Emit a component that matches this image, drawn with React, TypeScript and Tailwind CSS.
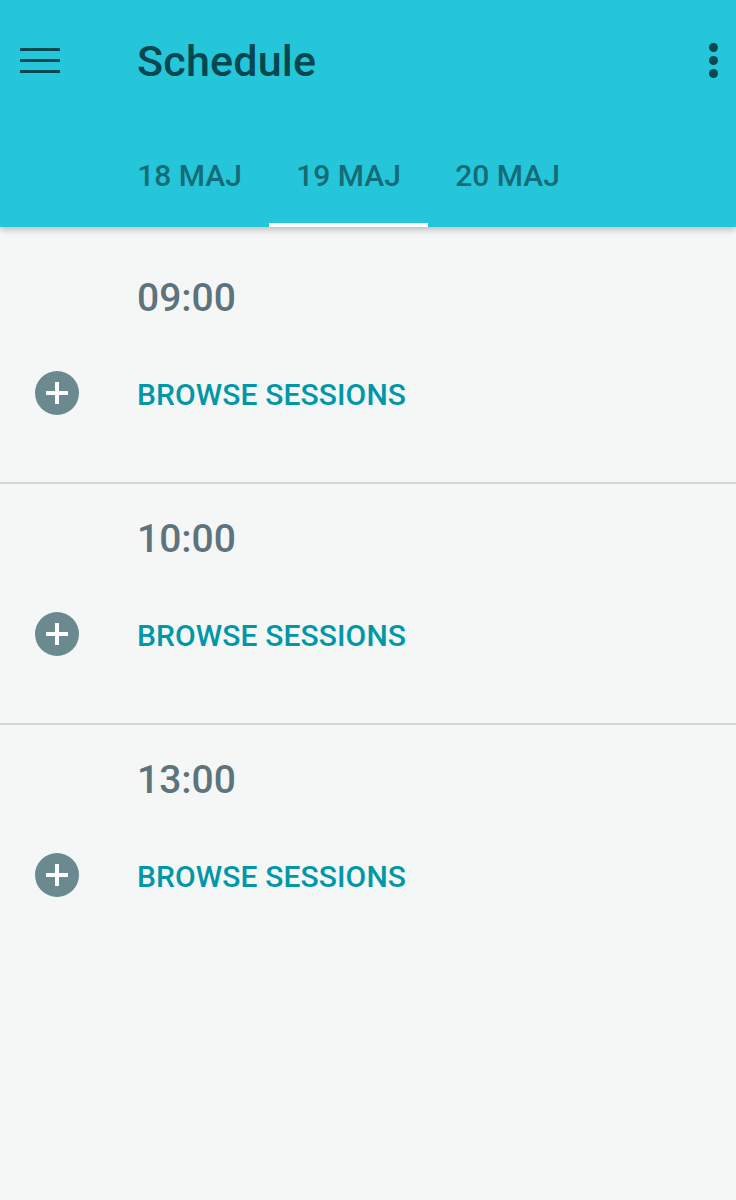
import React from 'react';

const slots = ['09:00', '10:00', '13:00'];
const days = ['18 MAJ', '19 MAJ', '20 MAJ'];

function PlusCircle() {
  return (
    <svg width="44" height="44" viewBox="0 0 44 44">
      <circle cx="22" cy="22" r="22" fill="#6A8A90" />
      <rect x="20" y="11" width="4" height="22" fill="#fff" />
      <rect x="11" y="20" width="22" height="4" fill="#fff" />
    </svg>
  );
}

export default function App() {
  return (
    <div
      className="w-[736px] h-[1200px] bg-[#F5F7F7] overflow-hidden"
      style={{ fontFamily: 'Roboto, "Noto Sans", sans-serif' }}
    >
      {/* App bar with tabs */}
      <div className="relative z-10 bg-[#26C6DA] shadow-[0_3px_6px_rgba(0,0,0,0.22)]">
        <div className="h-[120px] flex items-center">
          <div className="w-[137px] pl-[20px] flex flex-col gap-[8px]">
            <div className="w-[40px] h-[3px] bg-[#064950]" />
            <div className="w-[40px] h-[3px] bg-[#064950]" />
            <div className="w-[40px] h-[3px] bg-[#064950]" />
          </div>
          <h1 className="flex-1 pt-[3px] text-[43px] leading-none font-medium text-[#04474E] tracking-[0.2px]">
            Schedule
          </h1>
          <div className="w-[46px] flex flex-col items-center gap-[4px] pl-[1px]">
            <div className="w-[9px] h-[9px] rounded-full bg-[#064950]" />
            <div className="w-[9px] h-[9px] rounded-full bg-[#064950]" />
            <div className="w-[9px] h-[9px] rounded-full bg-[#064950]" />
          </div>
        </div>
        <div className="h-[107px] flex pl-[110px]">
          {days.map((d, i) => (
            <div
              key={d}
              className={
                'w-[159px] flex items-center justify-center pt-[6px] border-b-[4px] text-[30px] font-medium text-[#136C76] ' +
                (i === 1 ? 'border-white' : 'border-transparent')
              }
            >
              <span className="pt-[2px]">{d}</span>
            </div>
          ))}
        </div>
      </div>

      {/* Time slots */}
      <div className="pt-[16px]">
        {slots.map((t, i) => (
          <div
            key={t}
            className={
              'h-[241px] flex flex-col ' +
              (i < slots.length - 1 ? 'border-b-2 border-[#D2D5D6]' : '')
            }
          >
            <div className="mt-[35px] h-[40px] leading-[40px] pl-[137px] text-[39px] font-medium text-[#5E737B]">
              {t}
            </div>
            <div className="mt-[53px] h-[44px] flex items-center">
              <div className="w-[137px] pl-[35px]">
                <PlusCircle />
              </div>
              <span className="pt-[2px] text-[30px] font-medium text-[#0097A7] tracking-[0.1px]">
                BROWSE SESSIONS
              </span>
            </div>
          </div>
        ))}
      </div>
    </div>
  );
}
